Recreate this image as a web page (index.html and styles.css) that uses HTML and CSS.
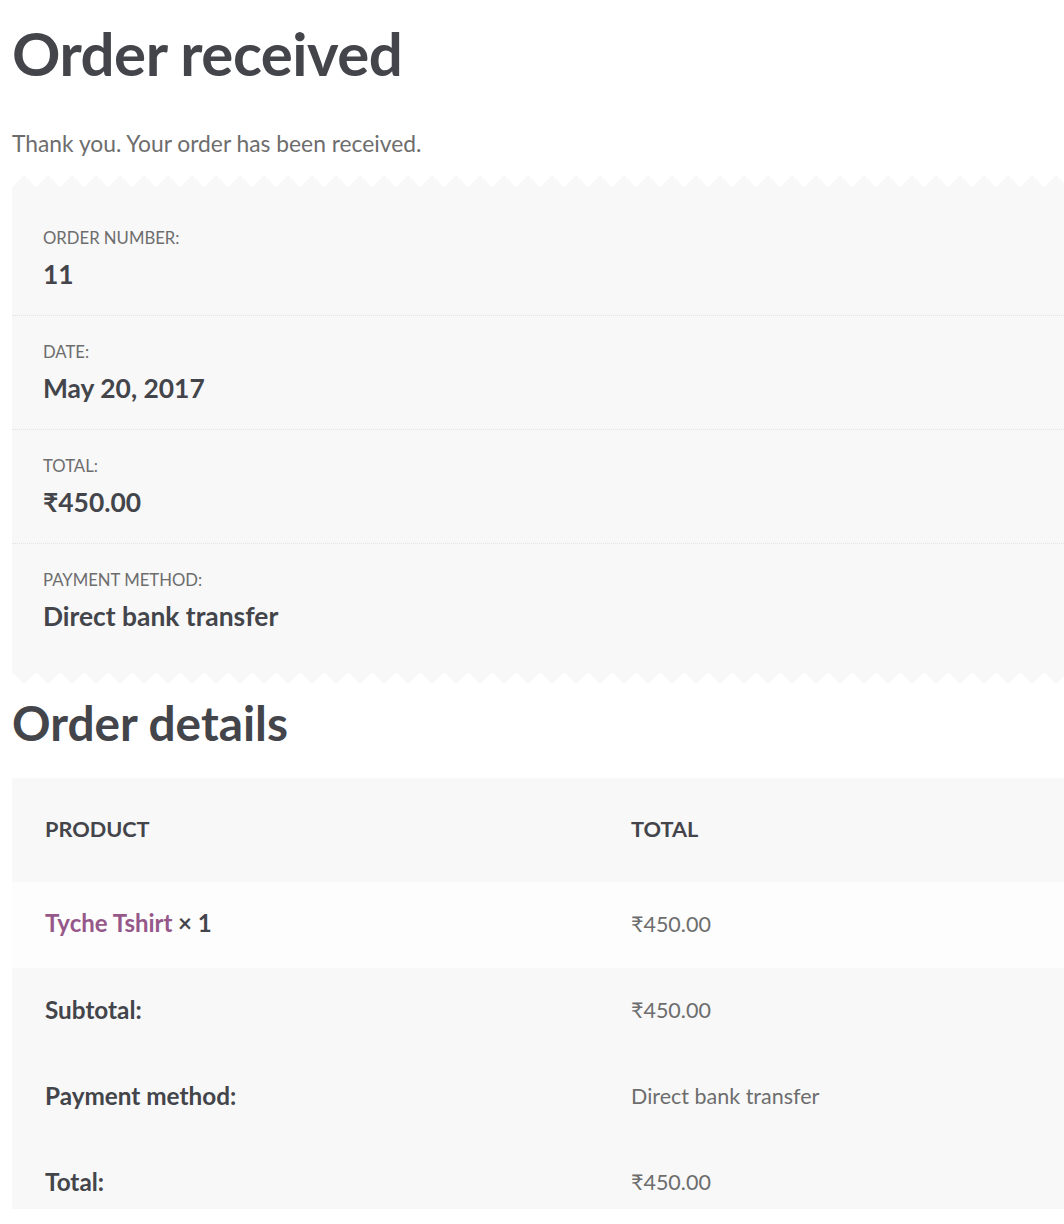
FILE: index.html
```html
<!DOCTYPE html>
<html lang="en">
<head>
<meta charset="utf-8">
<title>Order received</title>
<link rel="stylesheet" href="styles.css">
</head>
<body>
<main class="page">
  <h1 class="title">Order received</h1>
  <p class="notice">Thank you. Your order has been received.</p>

  <ul class="overview">
    <li class="overview-item">
      <span class="overview-label">Order number:</span>
      <strong class="overview-value">11</strong>
    </li>
    <li class="overview-item">
      <span class="overview-label">Date:</span>
      <strong class="overview-value">May 20, 2017</strong>
    </li>
    <li class="overview-item">
      <span class="overview-label">Total:</span>
      <strong class="overview-value">₹450.00</strong>
    </li>
    <li class="overview-item">
      <span class="overview-label">Payment method:</span>
      <strong class="overview-value">Direct bank transfer</strong>
    </li>
  </ul>

  <h2 class="section-title">Order details</h2>

  <table class="details">
    <thead>
      <tr>
        <th class="col-product">Product</th>
        <th class="col-total">Total</th>
      </tr>
    </thead>
    <tbody>
      <tr class="item-row">
        <td><a class="product-link" href="#">Tyche Tshirt</a> <strong class="qty">× 1</strong></td>
        <td>₹450.00</td>
      </tr>
    </tbody>
    <tfoot>
      <tr>
        <th>Subtotal:</th>
        <td>₹450.00</td>
      </tr>
      <tr>
        <th>Payment method:</th>
        <td>Direct bank transfer</td>
      </tr>
      <tr class="last-row">
        <th>Total:</th>
        <td>₹450.00</td>
      </tr>
    </tfoot>
  </table>
</main>
</body>
</html>
```

FILE: styles.css
```css
html, body {
  margin: 0;
  padding: 0;
  background: #ffffff;
}

body {
  font-family: "Lato", "Noto Sans", "DejaVu Sans", sans-serif;
  color: #6d6d6d;
  overflow-x: hidden;
}

.page {
  padding-left: 12px;
}

.title {
  margin: 0;
  padding-top: 16px;
  font-size: 60px;
  line-height: 74px;
  font-weight: 700;
  color: #43454b;
  letter-spacing: -0.5px;
}

.notice {
  margin: 38px 0 0;
  font-size: 22.8px;
  line-height: 30px;
  color: #6d6d6d;
}

.overview {
  list-style: none;
  margin: 29px 0 0;
  padding: 15px 0 15px;
  background: #f8f8f8;
  position: relative;
}

.overview::before,
.overview::after {
  content: "";
  position: absolute;
  left: 0;
  right: 0;
  height: 12px;
  background-size: 24px 12px;
  background-repeat: repeat-x;
}

.overview::before {
  top: -12px;
  background-image: conic-gradient(from 135deg at 50% 0, #f8f8f8 90deg, transparent 0);
}

.overview::after {
  bottom: -12px;
  background-image: conic-gradient(from -45deg at 50% 100%, #f8f8f8 90deg, transparent 0);
}

.overview-item {
  display: flex;
  flex-direction: column;
  gap: 9px;
  padding: 25px 0 25px 31px;
  border-bottom: 1px dotted #e4e4e4;
}

.overview-item:last-child {
  border-bottom: none;
}

.overview-label {
  font-size: 16.7px;
  line-height: 22px;
  text-transform: uppercase;
  color: #6d6d6d;
}

.overview-value {
  font-size: 26.4px;
  line-height: 32px;
  font-weight: 700;
  color: #43454b;
}

.section-title {
  margin: 23px 0 0;
  font-size: 47.8px;
  line-height: 56px;
  font-weight: 700;
  color: #43454b;
}

.details {
  margin-top: 27px;
  width: 100%;
  border-collapse: collapse;
  font-size: 21.5px;
  line-height: 28px;
}

.details th,
.details td {
  text-align: left;
  padding: 29px 33px;
  vertical-align: middle;
}

.details thead th {
  background: #f8f8f8;
  color: #43454b;
  font-size: 21.7px;
  font-weight: 700;
  text-transform: uppercase;
  padding: 37px 33px 39px;
}

.col-product {
  width: 520px;
}

.item-row td {
  background: #fdfdfd;
  padding-top: 28px;
  padding-bottom: 30px;
}

.details tfoot th,
.details tfoot td {
  background: #f8f8f8;
  padding-top: 28px;
  padding-bottom: 30px;
}

.details tfoot th {
  color: #43454b;
  font-size: 24.3px;
  font-weight: 700;
}

.details .last-row th,
.details .last-row td {
  padding-bottom: 13px;
}

.details td {
  color: #6d6d6d;
}

.product-link {
  color: #96588a;
  font-size: 24px;
  line-height: 1;
  font-weight: 700;
  text-decoration: none;
}

.qty {
  color: #43454b;
  font-size: 24px;
  line-height: 1;
  font-weight: 700;
}
```
